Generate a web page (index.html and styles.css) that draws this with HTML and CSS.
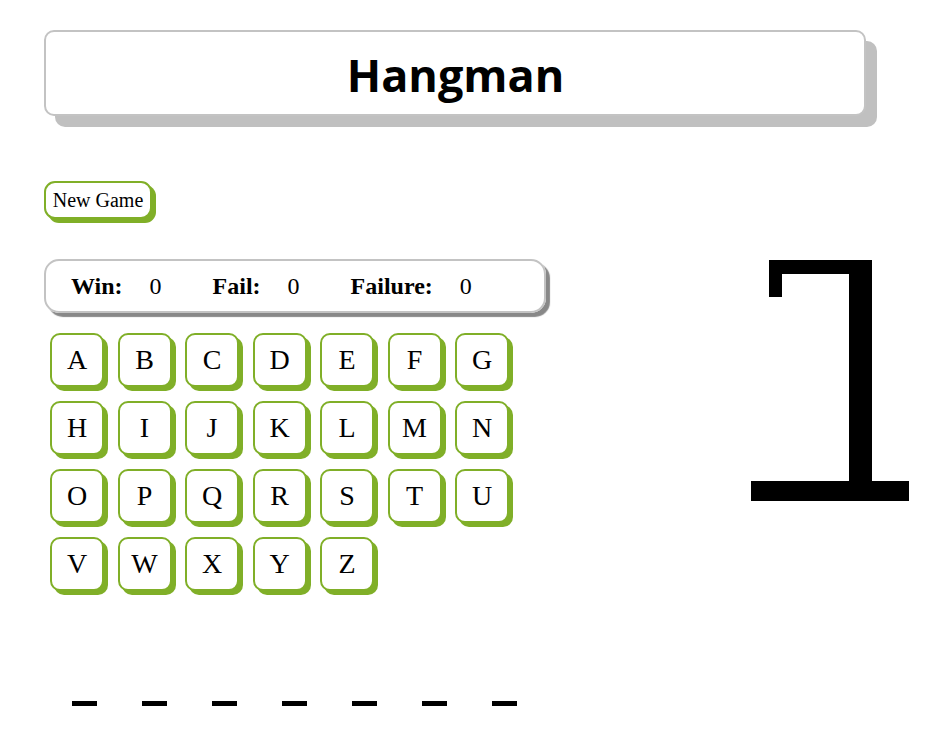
FILE: index.html
```html
<!DOCTYPE html>
<html lang="en">
<head>
<meta charset="utf-8">
<title>Hangman</title>
<link rel="stylesheet" href="styles.css">
</head>
<body>
<div class="page">
  <header class="title-box">
    <h1 class="title">Hangman</h1>
  </header>

  <button class="new-game" type="button">New Game</button>

  <div class="game">
    <div class="left">
      <div class="score">
        <span class="label">Win:</span><span class="val">0</span>
        <span class="label">Fail:</span><span class="val">0</span>
        <span class="label">Failure:</span><span class="val">0</span>
      </div>

      <div class="letters">
        <button class="key">A</button><button class="key">B</button><button class="key">C</button><button class="key">D</button><button class="key">E</button><button class="key">F</button><button class="key">G</button>
        <button class="key">H</button><button class="key">I</button><button class="key">J</button><button class="key">K</button><button class="key">L</button><button class="key">M</button><button class="key">N</button>
        <button class="key">O</button><button class="key">P</button><button class="key">Q</button><button class="key">R</button><button class="key">S</button><button class="key">T</button><button class="key">U</button>
        <button class="key">V</button><button class="key">W</button><button class="key">X</button><button class="key">Y</button><button class="key">Z</button>
      </div>

      <div class="word">
        <span class="dash"></span><span class="dash"></span><span class="dash"></span><span class="dash"></span><span class="dash"></span><span class="dash"></span><span class="dash"></span>
      </div>
    </div>

    <svg class="gallows" width="164" height="246" viewBox="0 0 164 246" aria-hidden="true">
      <rect x="21" y="2" width="103" height="14" fill="#000"/>
      <rect x="21" y="2" width="13" height="37" fill="#000"/>
      <rect x="101" y="2" width="23" height="222" fill="#000"/>
      <rect x="3" y="223" width="158" height="20" fill="#000"/>
    </svg>
  </div>
</div>
</body>
</html>
```

FILE: styles.css
```css
html, body {
  margin: 0;
  padding: 0;
  background: #ffffff;
}

body {
  margin: 8px;
  font-family: "Liberation Serif", "Times New Roman", serif;
  color: #000;
}

.page {
  padding-top: 22px;
  padding-left: 36px;
}

.title-box {
  box-sizing: border-box;
  width: 822px;
  height: 86px;
  border: 2px solid #c3c3c3;
  border-radius: 10px;
  box-shadow: 11px 11px 0 #c0c0c0;
  display: flex;
  align-items: center;
  justify-content: center;
  background: #fff;
}

.title {
  margin: 0 0 0 1px;
  font-family: "Comic Sans MS", "Open Sans", "DejaVu Sans", sans-serif;
  font-weight: 700;
  font-size: 45px;
  line-height: 1;
  padding-top: 2px;
}

.new-game {
  display: block;
  box-sizing: border-box;
  margin-top: 65px;
  width: 108px;
  height: 38px;
  padding: 0 6px;
  font-family: "Liberation Serif", "Times New Roman", serif;
  font-size: 20px;
  color: #000;
  background: #fff;
  border: 2px solid #80af28;
  border-radius: 11px;
  box-shadow: 4px 4px 0 #80af28;
  text-align: center;
  white-space: nowrap;
}

.game {
  display: flex;
  align-items: flex-start;
  margin-top: 40px;
}

.left {
  display: flex;
  flex-direction: column;
  align-items: flex-start;
}

.score {
  box-sizing: border-box;
  width: 502px;
  height: 54px;
  padding-left: 25px;
  border: 2px solid #c3c3c3;
  border-radius: 15px;
  box-shadow: 4px 4px 1px #888888;
  display: flex;
  align-items: center;
  font-size: 24px;
  line-height: 1;
}

.label {
  font-weight: 700;
  margin-right: 27px;
}

.val {
  margin-right: 51px;
}

.letters {
  display: flex;
  flex-wrap: wrap;
  column-gap: 13.5px;
  row-gap: 14px;
  width: 460px;
  margin-top: 20px;
  margin-left: 6px;
}

.key {
  box-sizing: border-box;
  width: 54px;
  height: 54px;
  padding: 0;
  font-family: "Liberation Serif", "Times New Roman", serif;
  font-size: 28px;
  color: #000;
  background: #fff;
  border: 2px solid #80af28;
  border-radius: 10px;
  box-shadow: 4px 4px 0 #80af28;
  display: flex;
  align-items: center;
  justify-content: center;
}

.word {
  display: flex;
  gap: 45px;
  margin-top: 110px;
  margin-left: 28px;
}

.dash {
  display: block;
  width: 25px;
  height: 5px;
  background: #000;
}

.gallows {
  display: block;
  margin-left: auto;
  margin-right: 12px;
  margin-top: -1px;
  flex: none;
}
```
